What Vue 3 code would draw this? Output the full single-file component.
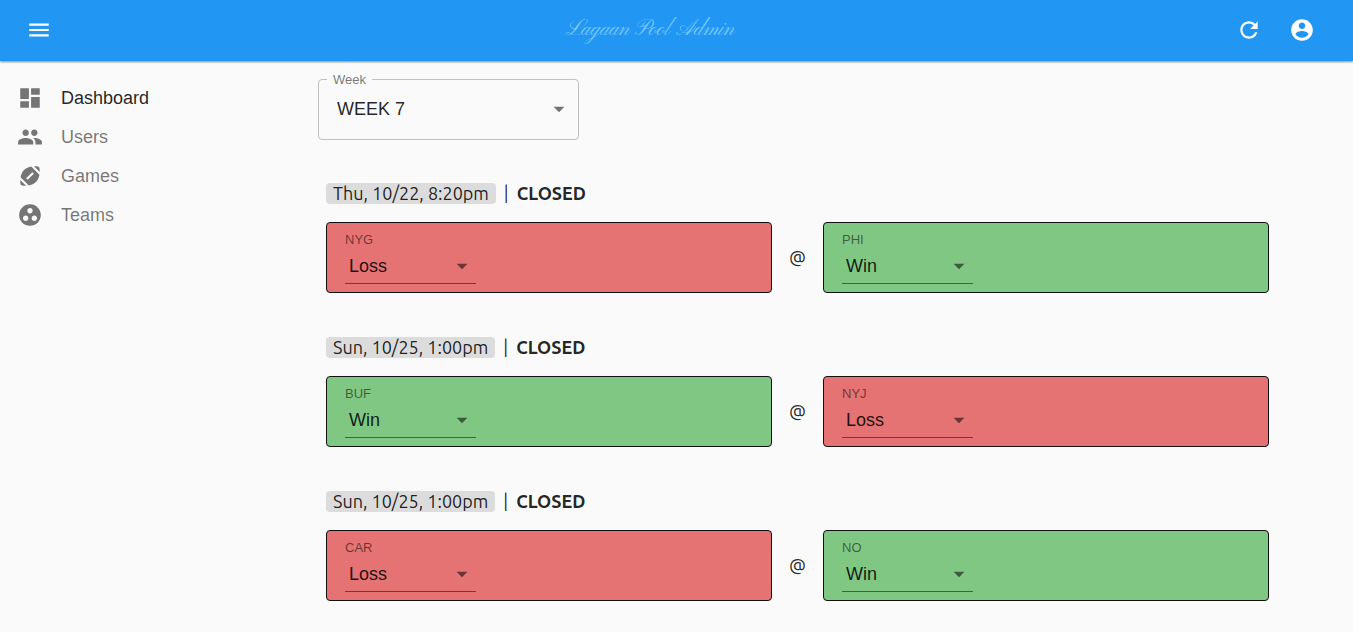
<script setup>
import { ref, reactive } from 'vue'

const week = ref('WEEK 7')
const links = [
  { label: 'Dashboard', active: true, path: 'M3 13h8V3H3v10zm0 8h8v-6H3v6zm10 0h8V11h-8v10zm0-18v6h8V3h-8z' },
  { label: 'Users', active: false, path: 'M16 11c1.66 0 2.99-1.34 2.99-3S17.66 5 16 5c-1.66 0-3 1.34-3 3s1.34 3 3 3zm-8 0c1.66 0 2.99-1.34 2.99-3S9.66 5 8 5C6.34 5 5 6.34 5 8s1.34 3 3 3zm0 2c-2.33 0-7 1.17-7 3.5V19h14v-2.5c0-2.33-4.67-3.5-7-3.5zm8 0c-.29 0-.62.02-.97.05 1.16.84 1.97 1.97 1.97 3.45V19h6v-2.5c0-2.33-4.67-3.5-7-3.5z' },
  { label: 'Games', active: false, path: 'M3.02 15.62c-.08 2.42.32 4.34.67 4.69s2.28.76 4.69.67l-5.36-5.36zM13.08 3.28C10.75 3.7 8.29 4.62 6.46 6.46s-2.76 4.29-3.18 6.62l7.63 7.63c2.34-.41 4.79-1.34 6.62-3.18s2.76-4.29 3.18-6.62l-7.63-7.63zM9.9 15.5l-1.4-1.4 5.6-5.6 1.4 1.4-5.6 5.6zM20.98 8.38c.08-2.42-.32-4.34-.67-4.69s-2.28-.76-4.69-.67l5.36 5.36z' },
  { label: 'Teams', active: false, path: 'M12 2C6.48 2 2 6.48 2 12s4.48 10 10 10 10-4.48 10-10S17.52 2 12 2zM8 17.5c-1.38 0-2.5-1.12-2.5-2.5s1.12-2.5 2.5-2.5 2.5 1.12 2.5 2.5-1.12 2.5-2.5 2.5zM9.5 8c0-1.38 1.12-2.5 2.5-2.5s2.5 1.12 2.5 2.5-1.12 2.5-2.5 2.5S9.5 9.38 9.5 8zm6.5 9.5c-1.38 0-2.5-1.12-2.5-2.5s1.12-2.5 2.5-2.5 2.5 1.12 2.5 2.5-1.12 2.5-2.5 2.5z' },
]
const games = reactive([
  { time: 'Thu, 10/22, 8:20pm', teams: [{ name: 'NYG', result: 'Loss' }, { name: 'PHI', result: 'Win' }] },
  { time: 'Sun, 10/25, 1:00pm', teams: [{ name: 'BUF', result: 'Win' }, { name: 'NYJ', result: 'Loss' }] },
  { time: 'Sun, 10/25, 1:00pm', teams: [{ name: 'CAR', result: 'Loss' }, { name: 'NO', result: 'Win' }] },
])
</script>

<template>
  <div class="app">
    <header class="bar">
      <button type="button" class="icon-button" aria-label="Menu">
        <svg class="icon" viewBox="0 0 24 24"><path d="M3 18h18v-2H3v2zm0-5h18v-2H3v2zm0-7v2h18V6H3z" /></svg>
      </button>
      <h1 class="title">Lagaan Pool Admin</h1>
      <div class="actions">
        <button type="button" class="icon-button" aria-label="Refresh">
          <svg class="icon" viewBox="0 0 24 24"><path d="M17.65 6.35C16.2 4.9 14.21 4 12 4c-4.42 0-7.99 3.58-7.99 8s3.57 8 7.99 8c3.73 0 6.84-2.55 7.73-6h-2.08c-.82 2.33-3.04 4-5.65 4-3.31 0-6-2.69-6-6s2.69-6 6-6c1.66 0 3.14.69 4.22 1.78L13 11h7V4l-2.35 2.35z" /></svg>
        </button>
        <button type="button" class="icon-button" aria-label="Account">
          <svg class="icon" viewBox="0 0 24 24"><path d="M12 2C6.48 2 2 6.48 2 12s4.48 10 10 10 10-4.48 10-10S17.52 2 12 2zm0 3c1.66 0 3 1.34 3 3s-1.34 3-3 3-3-1.34-3-3 1.34-3 3-3zm0 14.2c-2.5 0-4.71-1.28-6-3.22.03-1.99 4-3.08 6-3.08 1.99 0 5.97 1.09 6 3.08-1.29 1.94-3.5 3.22-6 3.22z" /></svg>
        </button>
      </div>
    </header>

    <div class="body">
      <nav class="nav">
        <a v-for="link in links" :key="link.label" href="#" class="link" :class="{ active: link.active }">
          <svg class="icon" viewBox="0 0 24 24"><path :d="link.path" /></svg>
          <span>{{ link.label }}</span>
        </a>
      </nav>

      <main class="content">
        <div class="week">
          <label for="week" class="week-label">Week</label>
          <select id="week" v-model="week" class="select week-select">
            <option>WEEK 7</option>
          </select>
          <svg class="icon arrow week-arrow" viewBox="0 0 24 24"><path d="M7 10l5 5 5-5z" /></svg>
        </div>

        <section v-for="(game, g) in games" :key="g" class="game">
          <div class="heading">
            <span class="time">{{ game.time }}</span>
            <span class="divider">|</span>
            <strong class="status">CLOSED</strong>
          </div>
          <div class="matchup">
            <template v-for="(team, t) in game.teams" :key="team.name">
              <span v-if="t" class="at">@</span>
              <div class="card" :class="team.result.toLowerCase()">
                <label :for="`team-${team.name}`" class="team">{{ team.name }}</label>
                <div class="result">
                  <select :id="`team-${team.name}`" v-model="team.result" class="select result-select">
                    <option>Win</option>
                    <option>Loss</option>
                  </select>
                  <svg class="icon arrow" viewBox="0 0 24 24"><path d="M7 10l5 5 5-5z" /></svg>
                </div>
              </div>
            </template>
          </div>
        </section>
      </main>
    </div>
  </div>
</template>

<style>
body {
  margin: 0;
  background: #fafafa;
}
</style>

<style scoped>
.app {
  font-family: "Liberation Sans", Arial, sans-serif;
  font-size: 18px;
  line-height: 21px;
  color: rgba(0, 0, 0, 0.87);
}
.icon {
  display: block;
  width: 26px;
  height: 26px;
  fill: currentColor;
  flex: none;
}
.bar {
  position: relative;
  display: flex;
  align-items: center;
  padding: 4px 25px 5px 13px;
  background: #2196f3;
  color: #fff;
  box-shadow: 0 1px 2px rgba(0, 0, 0, 0.45);
}
.actions {
  display: flex;
  gap: 1px;
}
.icon-button {
  padding: 13px;
  margin: 0;
  border: 0;
  background: none;
  color: inherit;
  cursor: pointer;
}
.title {
  flex: 1;
  margin: 0 0 0 12px;
  font-family: "Pinyon Script", cursive;
  font-size: 22px;
  line-height: 52px;
  font-weight: 400;
  text-align: center;
  color: #7accff;
}
.body {
  display: flex;
}
.nav {
  display: flex;
  flex-direction: column;
  width: 318px;
  flex: none;
  box-sizing: border-box;
  padding: 24px 17px;
}
.link {
  display: flex;
  align-items: center;
  gap: 18px;
  padding-bottom: 13px;
  color: rgba(0, 0, 0, 0.54);
  text-decoration: none;
}
.link.active {
  color: rgba(0, 0, 0, 0.87);
}
.link .icon {
  color: #757575;
}
.content {
  flex: 1;
  min-width: 0;
  padding: 18px 84px 12px 0;
}
.select {
  display: block;
  width: 100%;
  margin: 0;
  border: 0;
  border-radius: 0;
  background: transparent;
  appearance: none;
  font: inherit;
  color: inherit;
  cursor: pointer;
}
.arrow {
  position: absolute;
  right: 1px;
  top: 0;
  color: rgba(0, 0, 0, 0.54);
  pointer-events: none;
}
.week {
  position: relative;
  width: 261px;
}
.week-label {
  position: absolute;
  left: 9px;
  top: -7px;
  padding: 0 6px;
  background: #fafafa;
  font-size: 13px;
  line-height: 15px;
  color: rgba(0, 0, 0, 0.54);
}
.week-select {
  padding: 19px 36px 19px 18px;
  border: 1px solid #c0c0c0;
  border-radius: 4px;
}
.week-arrow {
  right: 7px;
  top: 17px;
}
.game {
  margin: 43px 0 0 8px;
}
.game + .game {
  margin-top: 44px;
}
.heading {
  display: flex;
  gap: 8px;
  font-family: Ubuntu, "Noto Sans", sans-serif;
}
.time {
  padding: 0 7px;
  border-radius: 4px;
  background: #dcdcdc;
}
.matchup {
  display: grid;
  grid-template-columns: 1fr 51px 1fr;
  align-items: center;
  margin-top: 18px;
}
.at {
  font-family: Ubuntu, "Noto Sans", sans-serif;
  text-align: center;
}
.card {
  padding: 9px 18px 8px;
  border: 1px solid #111;
  border-radius: 4px;
}
.loss {
  background: #e57373;
}
.win {
  background: #81c784;
}
.team {
  display: block;
  font-size: 13px;
  line-height: 15px;
  color: rgba(0, 0, 0, 0.54);
}
.result {
  position: relative;
  width: 131px;
}
.result-select {
  padding: 9px 28px 6px 4px;
  border-bottom: 1px solid rgba(0, 0, 0, 0.5);
}
.result .arrow {
  top: 6px;
}
</style>
